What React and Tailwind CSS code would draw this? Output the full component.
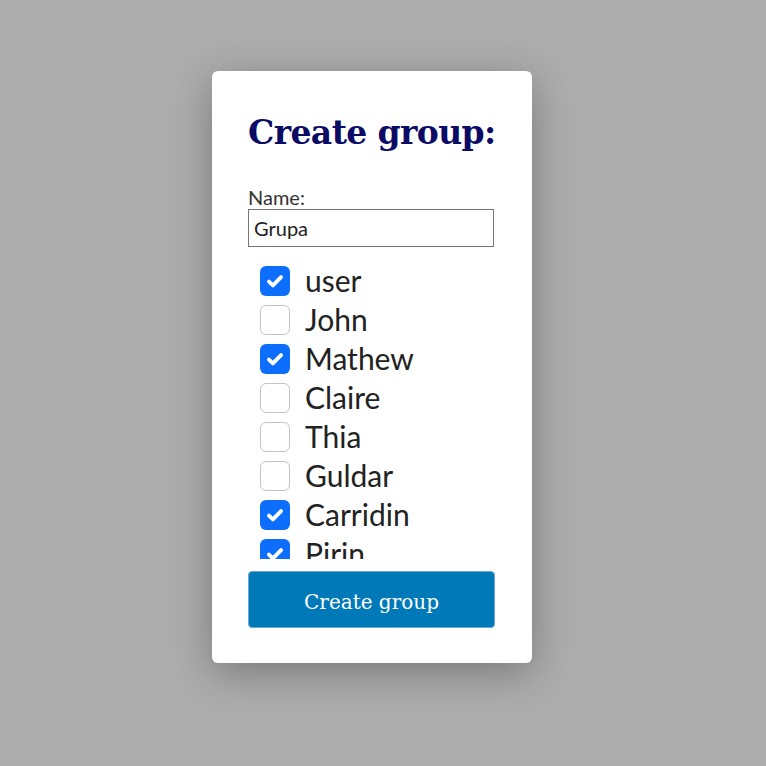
import React from "react";

const users = [
  ["user", true],
  ["John", false],
  ["Mathew", true],
  ["Claire", false],
  ["Thia", false],
  ["Guldar", false],
  ["Carridin", true],
  ["Pirin", true],
  ["Lanfear", false],
];

function Box({ checked }) {
  return checked ? (
    <span className="flex h-[30px] w-[30px] shrink-0 items-center justify-center rounded-[6px] bg-[#0d6efd]">
      <svg width="22" height="22" viewBox="0 0 16 16" fill="none">
        <path d="M3.6 8.4l2.9 2.8 5.9-6" stroke="white" strokeWidth="2.8" strokeLinecap="round" strokeLinejoin="round" />
      </svg>
    </span>
  ) : (
    <span className="h-[30px] w-[30px] shrink-0 rounded-[6px] border border-[#c4c4c4] bg-white" />
  );
}

export default function App() {
  return (
    <div className="flex h-[766px] w-[766px] items-start justify-start bg-[#adadad] pl-[212px] pt-[71px]">
      <div className="flex h-[592px] w-[320px] flex-col rounded-[6px] bg-white px-[36px] pt-[38px] shadow-[0_10px_40px_rgba(0,0,0,0.3)]">
        <h1 className="whitespace-nowrap text-[33px] font-bold leading-[48px] tracking-[-0.6px] text-[#0b0b66]" style={{ fontFamily: '"DejaVu Serif", "Liberation Serif", serif' }}>
          Create group:
        </h1>
        <div className="mt-[28px] text-[20px] leading-[24px] text-[#333]" style={{ fontFamily: "Lato, sans-serif" }}>
          Name:
        </div>
        <input
          defaultValue="Grupa"
          className="h-[38px] w-[246px] border border-[#767676] px-[5px] text-[20px] text-[#222] outline-none"
          style={{ fontFamily: "Lato, sans-serif" }}
        />
        <div className="mt-[14px] h-[298px] overflow-hidden pl-[12px]">
          {users.map(([n, c]) => (
            <div key={n} className="flex h-[39px] items-center gap-[15px]">
              <Box checked={c} />
              <span className="text-[30px] leading-[39px] text-[#222]" style={{ fontFamily: "Lato, sans-serif" }}>
                {n}
              </span>
            </div>
          ))}
        </div>
        <button
          className="mt-[12px] h-[57px] w-[247px] rounded-[4px] border border-[#6aa8d8] bg-[#0079b9] pt-[4px] text-[20px] text-white"
          style={{ fontFamily: '"DejaVu Serif", serif' }}
        >
          Create group
        </button>
      </div>
    </div>
  );
}
